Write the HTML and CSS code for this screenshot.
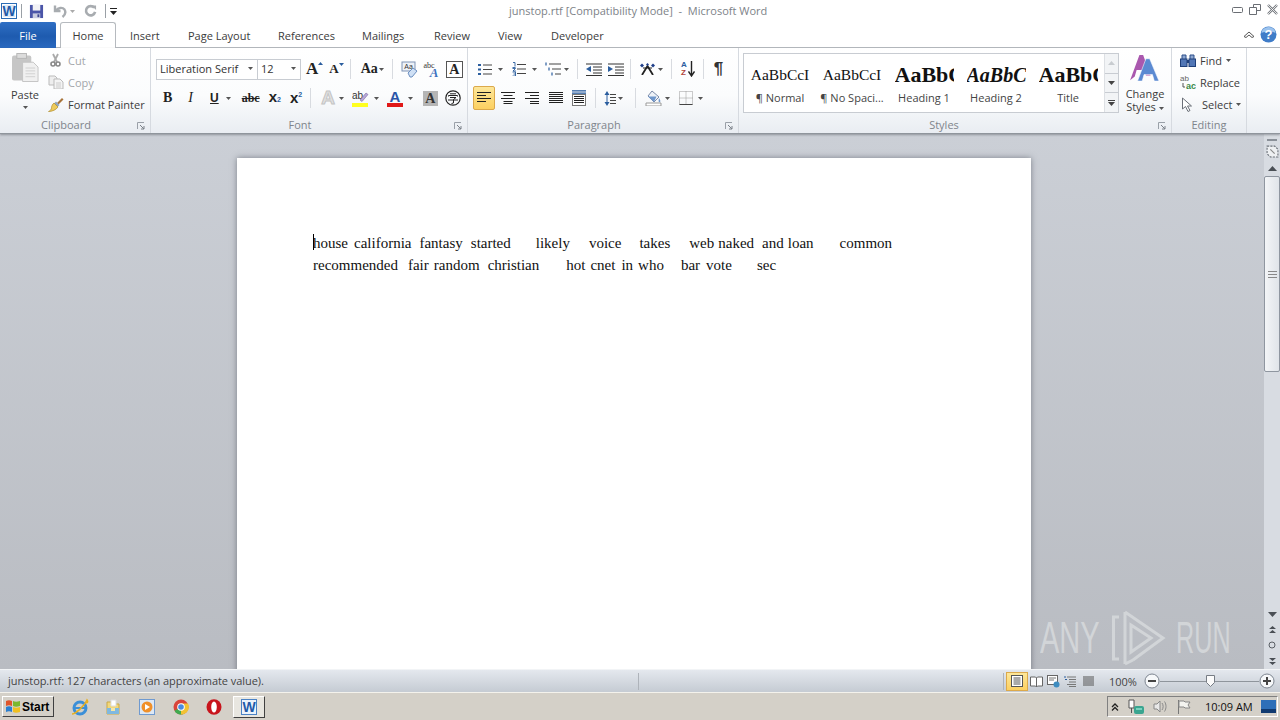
FILE: index.html
```html
<!DOCTYPE html>
<html lang="en">
<head>
<meta charset="utf-8">
<title>junstop.rtf</title>
<link rel="stylesheet" href="styles.css">
</head>
<body>
<div class="window">
  <header class="titlebar">
    <div class="qat">
      <svg class="wordlogo" width="16" height="16" viewBox="0 0 16 16"><rect x=".5" y=".5" width="15" height="15" fill="#fff" stroke="#2b6cb5"/><rect x="2" y="2" width="12" height="12" fill="#dce9f7"/><text x="8" y="13" class="wl">W</text></svg>
      <i class="qsep"></i>
      <svg class="save" width="15" height="15" viewBox="0 0 16 16"><path d="M1 1h14v14H1z" fill="#4a55a8"/><path d="M4 1h8v6H4z" fill="#f2f2f5"/><path d="M4 10h8v5H4z" fill="#c8cce0"/><path d="M9 11h2v3H9z" fill="#3b4590"/></svg>
      <svg class="undo" width="14" height="14" viewBox="0 0 14 14"><path d="M2 1.500v5.500h5.500" fill="none" stroke="#a8acb0" stroke-width="2.400"/><path d="M3 6.500C5 3.500 9.500 3 11.500 5.500c1.500 2.500.5 5.500-2 7.500" fill="none" stroke="#a8acb0" stroke-width="2.400"/></svg>
      <svg class="tri tri-q" width="5" height="3" viewBox="0 0 5 3"><path d="M0 0h5L2.500 3z"/></svg>
      <svg class="redo" width="13" height="14" viewBox="0 0 14 14"><path d="M11 3.500A5 5 0 1 0 12 8" fill="none" stroke="#a8acb0" stroke-width="2.800"/><path d="M8 1h5v5z" fill="#a8acb0"/></svg>
      <i class="qsep"></i>
      <svg class="qmore" width="7" height="7" viewBox="0 0 7 7"><path d="M0 0h7v1H0zM0 3h7L3.500 7z" fill="#222"/></svg>
    </div>
    <div class="title">junstop.rtf [Compatibility Mode]&nbsp; -&nbsp; Microsoft Word</div>
    <div class="winctl">
      <svg width="11" height="6" viewBox="0 0 11 6"><rect x=".5" y=".5" width="10" height="5" rx="1" fill="#fff" stroke="#6a6e74"/></svg>
      <svg width="12" height="11" viewBox="0 0 12 11"><path d="M4.500.5h7v6h-7z" fill="#fff" stroke="#6a6e74"/><path d="M.5 3.500h7v7h-7z" fill="#fff" stroke="#6a6e74"/></svg>
      <svg width="11" height="11" viewBox="0 0 11 11"><path d="M1 1l9 9M10 1l-9 9" stroke="#777b80" stroke-width="2.400"/><path d="M1 1l9 9M10 1l-9 9" stroke="#fff" stroke-width=".8"/></svg>
    </div>
  </header>

  <nav class="tabs">
    <div class="tab file">File</div>
    <div class="tab home">Home</div>
    <div class="tab t-ins">Insert</div>
    <div class="tab t-pl">Page Layout</div>
    <div class="tab t-ref">References</div>
    <div class="tab t-mai">Mailings</div>
    <div class="tab t-rev">Review</div>
    <div class="tab t-vie">View</div>
    <div class="tab t-dev">Developer</div>
    <div class="tabend">
      <svg width="12" height="7" viewBox="0 0 12 7"><path d="M1 5.500L6 1l5 4.500-2 1L6 4 3 6.500z" fill="#fff" stroke="#555"/></svg>
      <svg width="17" height="17" viewBox="0 0 17 17"><circle cx="8.500" cy="8.500" r="8" fill="#3f7cc8"/><path d="M1.500 7a7 6 0 0 1 14 0c-3-2-10-2-14 0z" fill="#9cc3ee"/><text x="8.500" y="13" class="helpq">?</text></svg>
    </div>
  </nav>

  <section class="ribbon">
    <div class="group g-clip">
      <div class="gbody clip-body">
        <div class="paste">
          <svg width="27" height="30" viewBox="0 0 28 30"><rect x="0" y="2" width="20" height="26" rx="2" fill="#c6c6c6"/><rect x="5" y="0" width="10" height="5" fill="#dcdcdc" stroke="#b5b5b5"/><path d="M11 9h11l5 5v15H11z" fill="#f0f0f0" stroke="#c4c4c4"/><path d="M14 15h10M14 18h10M14 21h10M14 24h10" stroke="#d0d0d0"/></svg>
          <span class="lbl paste-l">Paste</span>
          <svg class="tri" width="5" height="3" viewBox="0 0 5 3"><path d="M0 0h5L2.500 3z"/></svg>
        </div>
        <div class="clip-col">
          <div class="row dim"><svg width="14" height="14" viewBox="0 0 14 14"><path d="M4 1l4 8M9 1L5 9" stroke="#aaa" stroke-width="1.800"/><circle cx="4" cy="11" r="2" fill="none" stroke="#888" stroke-width="1.600"/><circle cx="9" cy="11" r="2" fill="none" stroke="#888" stroke-width="1.600"/></svg><span class="lbl">Cut</span></div>
          <div class="row dim"><svg width="16" height="14" viewBox="0 0 16 14"><path d="M1 1h6l2 2v7H1z" fill="#eee" stroke="#bbb"/><path d="M6 4h6l3 3v7H6z" fill="#f4f4f4" stroke="#bbb"/><path d="M8 8h5M8 10h5M8 12h5" stroke="#ccc"/></svg><span class="lbl">Copy</span></div>
          <div class="row"><svg width="16" height="15" viewBox="0 0 16 15"><path d="M9 6l5-5 1.500 1.500-5 5z" fill="#a8743a"/><path d="M8 4.500l3.500 3.500-2 2-3.500-3.500z" fill="#8fa6c0"/><path d="M6 6l4 4c-2 3-6 4.500-9.500 4.500 2-1 3-2 3-4 0-1 1-3.500 2.500-4.500z" fill="#eecb5b" stroke="#b08c2c" stroke-width=".7"/></svg><span class="lbl">Format Painter</span></div>
        </div>
      </div>
      <div class="gname"><span>Clipboard</span><svg class="launch" width="8" height="8" viewBox="0 0 8 8"><path d="M.5 7V.5H7" fill="none" stroke="#9aa0a8"/><path d="M3 3l4 4M7 4v3H4" fill="none" stroke="#7a8088"/></svg></div>
    </div>

    <div class="group g-font">
      <div class="gbody font-body">
        <div class="frow frow1">
          <div class="combo fname"><span>Liberation Serif</span><svg class="tri" width="5" height="3" viewBox="0 0 5 3"><path d="M0 0h5L2.500 3z"/></svg></div>
          <div class="combo fsize"><span>12</span><svg class="tri" width="5" height="3" viewBox="0 0 5 3"><path d="M0 0h5L2.500 3z"/></svg></div>
          <span class="ic grow">A<svg width="5" height="3" viewBox="0 0 5 3"><path d="M0 3h5L2.500 0z" fill="#2a5d9e"/></svg></span>
          <span class="ic shrink">A<svg width="5" height="3" viewBox="0 0 5 3"><path d="M0 0h5L2.500 3z" fill="#2a5d9e"/></svg></span>
          <i class="vsep s1"></i>
          <span class="ic aa">Aa<svg class="tri" width="5" height="3" viewBox="0 0 5 3"><path d="M0 0h5L2.500 3z"/></svg></span>
          <i class="vsep s2"></i>
          <svg class="clearfmt" width="17" height="17" viewBox="0 0 17 17"><rect x="1" y="1" width="13" height="9" fill="#eef2f8" stroke="#7f93b5"/><text x="7.500" y="8" class="tiny">Aa</text><path d="M7 12l5-5 4 3-5 6H9z" fill="#cfe0f5" stroke="#6c8fc0"/></svg>
          <svg class="texteff" width="17" height="17" viewBox="0 0 17 17"><text x="7" y="7" class="tiny2">abc</text><text x="12" y="16" class="blueA">A</text></svg>
          <span class="boxA">A</span>
        </div>
        <div class="frow frow2">
          <span class="fb b">B</span>
          <span class="fb it">I</span>
          <span class="fb u">U</span><svg class="tri tri-u" width="5" height="3" viewBox="0 0 5 3"><path d="M0 0h5L2.500 3z"/></svg>
          <span class="fb st">abc</span>
          <span class="fb sub">x<small>2</small></span>
          <span class="fb sup">x<sup>2</sup></span>
          <i class="vsep s3"></i>
          <span class="ghostA">A</span><svg class="tri tri-g" width="5" height="3" viewBox="0 0 5 3"><path d="M0 0h5L2.500 3z" fill="#aaa"/></svg>
          <svg class="hl" width="17" height="17" viewBox="0 0 17 17"><text x="0" y="9" class="ab">ab</text><path d="M8 10l6-7 2 1.500-6 7z" fill="#b8a8d8" stroke="#7a68a0" stroke-width=".6"/><rect x="0" y="13" width="16" height="4" fill="#ffff20"/></svg>
          <svg class="tri tri-h" width="5" height="3" viewBox="0 0 5 3"><path d="M0 0h5L2.500 3z"/></svg>
          <span class="colA">A</span>
          <svg class="tri tri-c" width="5" height="3" viewBox="0 0 5 3"><path d="M0 0h5L2.500 3z"/></svg>
          <span class="shadeA">A</span>
          <svg class="enc" width="16" height="16" viewBox="0 0 16 16"><circle cx="8" cy="8" r="7.200" fill="none" stroke="#222" stroke-width="1.200"/><path d="M5 3.800h6M3.500 6.500v-1h9v1M5 7.500h6L8.500 9.500M3 10h10M8.500 9.500v3.500l-2 .5" fill="none" stroke="#222"/></svg>
        </div>
      </div>
      <div class="gname"><span>Font</span><svg class="launch" width="8" height="8" viewBox="0 0 8 8"><path d="M.5 7V.5H7" fill="none" stroke="#9aa0a8"/><path d="M3 3l4 4M7 4v3H4" fill="none" stroke="#7a8088"/></svg></div>
    </div>

    <div class="group g-para">
      <div class="gbody para-body">
        <div class="prow prow1">
          <svg width="14" height="13" viewBox="0 0 14 13"><path d="M5 2h9M5 6.500h9M5 11h9" stroke="#444"/><path d="M0 1h3v2H0zM0 5.500h3v2H0zM0 10h3v2H0z" fill="#2a5d9e"/></svg>
          <svg class="tri pt" width="5" height="3" viewBox="0 0 5 3"><path d="M0 0h5L2.500 3z"/></svg>
          <svg class="numl" width="14" height="14" viewBox="0 0 14 14"><path d="M5 2.500h9M5 7h9M5 11.500h9" stroke="#444"/><path d="M1 .5h2v4M.5 5.500h3M.5 6.500h3l-2.500 2.500h3M.5 10h3v4h-3M1.500 12h2" fill="none" stroke="#2a5d9e" stroke-width=".9"/></svg>
          <svg class="tri pt" width="5" height="3" viewBox="0 0 5 3"><path d="M0 0h5L2.500 3z"/></svg>
          <svg class="mlev" width="16" height="14" viewBox="0 0 16 14"><path d="M4 2h12M7 7h9M10 12h6" stroke="#444"/><path d="M1 .5v3M4 5.500v3M7 10.500v3" stroke="#2a5d9e" stroke-width="1.200"/></svg>
          <svg class="tri pt" width="5" height="3" viewBox="0 0 5 3"><path d="M0 0h5L2.500 3z"/></svg>
          <i class="vsep ps1"></i>
          <svg class="outd" width="16" height="13" viewBox="0 0 16 13"><path d="M0 1h16M7 4h9M7 7h9M7 10h9M0 12.500h16" stroke="#333"/><path d="M0 6l5-3v6z" fill="#2a5d9e"/></svg>
          <svg class="ind" width="16" height="13" viewBox="0 0 16 13"><path d="M0 1h16M7 4h9M7 7h9M7 10h9M0 12.500h16" stroke="#333"/><path d="M5 6L0 3v6z" fill="#2a5d9e"/></svg>
          <i class="vsep ps2"></i>
          <svg class="asian" width="17" height="12" viewBox="0 0 17 12"><path d="M3 12L8.500 3l5.500 9" fill="none" stroke="#222" stroke-width="1.800"/><path d="M4 5h9" stroke="#222"/><path d="M3 .5l2 2-2 2-2-2zM14 .5l2 2-2 2-2-2zM8.500 0l1.500 1.500L8.500 3 7 1.500z" fill="#1f3f8a"/></svg>
          <svg class="tri pt" width="5" height="3" viewBox="0 0 5 3"><path d="M0 0h5L2.500 3z"/></svg>
          <i class="vsep ps3"></i>
          <span class="sort"><b class="az"><em>A</em><em class="z">Z</em></b><svg width="7" height="16" viewBox="0 0 7 16"><path d="M3.500 0v14M.5 10.500l3 4.500 3-4.500" fill="none" stroke="#222" stroke-width="1.400"/></svg></span>
          <i class="vsep ps4"></i>
          <span class="pilcrow">¶</span>
        </div>
        <div class="prow prow2">
          <span class="alignbtn on"><svg width="14" height="12" viewBox="0 0 14 12"><path d="M0 .5h14M0 3.500h9M0 6.500h14M0 9.500h9" stroke="#222"/></svg></span>
          <span class="alignbtn"><svg width="14" height="12" viewBox="0 0 14 12"><path d="M0 .5h14M2.500 3.500h9M0 6.500h14M2.500 9.500h9M2.500 11.500h9" stroke="#222"/></svg></span>
          <span class="alignbtn"><svg width="14" height="12" viewBox="0 0 14 12"><path d="M0 .5h14M5 3.500h9M0 6.500h14M5 9.500h9M5 11.500h9" stroke="#222"/></svg></span>
          <span class="alignbtn"><svg width="14" height="12" viewBox="0 0 14 12"><path d="M0 .5h14M0 2.500h14M0 4.500h14M0 6.500h14M0 8.500h14M0 10.500h14" stroke="#222"/></svg></span>
          <svg class="distrib" width="16" height="16" viewBox="0 0 16 16"><path d="M1 .5h14M1 3.500h14" stroke="#2a5d9e" stroke-width=".8"/><path d="M1 2h14" stroke="#2a5d9e"/><rect x="1.500" y="4.500" width="13" height="11" fill="#fff" stroke="#777"/><path d="M3 6.500h10M3 8.500h10M3 10.500h10M3 12.500h10" stroke="#222"/></svg>
          <i class="vsep ps5"></i>
          <svg class="lsp" width="12" height="15" viewBox="0 0 12 15"><path d="M3 0l2.500 4h-5zM3 15L.5 11h5z" fill="#2a5d9e"/><path d="M3 4v7" stroke="#2a5d9e"/><path d="M6 3.500h6M6 6.500h6M6 9.500h6M6 12.500h6" stroke="#444"/></svg>
          <svg class="tri pt" width="5" height="3" viewBox="0 0 5 3"><path d="M0 0h5L2.500 3z"/></svg>
          <i class="vsep ps6"></i>
          <svg class="fill" width="17" height="16" viewBox="0 0 17 16"><path d="M7 1l7 6-5 5-6-6z" fill="#eef2f8" stroke="#7a8aa8"/><path d="M3 6.500h8.500L9 12z" fill="#6f97cc"/><path d="M14 8c1 2 2 3 1 4s-2 0-1-4z" fill="#6f97cc"/><path d="M1 13h15v3H1z" fill="#fff" stroke="#999"/></svg>
          <svg class="tri pt" width="5" height="3" viewBox="0 0 5 3"><path d="M0 0h5L2.500 3z"/></svg>
          <svg class="bord" width="14" height="14" viewBox="0 0 14 14"><path d="M.5.500h13v13H.5zM7 .5v13M.5 7h13" fill="none" stroke="#999" stroke-dasharray="1 1"/><path d="M.5 13.500h13" stroke="#444"/></svg>
          <svg class="tri pt" width="5" height="3" viewBox="0 0 5 3"><path d="M0 0h5L2.500 3z"/></svg>
        </div>
      </div>
      <div class="gname"><span>Paragraph</span><svg class="launch" width="8" height="8" viewBox="0 0 8 8"><path d="M.5 7V.5H7" fill="none" stroke="#9aa0a8"/><path d="M3 3l4 4M7 4v3H4" fill="none" stroke="#7a8088"/></svg></div>
    </div>

    <div class="group g-styles">
      <div class="gbody styles-body">
        <div class="gallery">
          <div class="style s-n"><div class="prev">AaBbCcI</div><div class="sname">¶ Normal</div></div>
          <div class="style s-n"><div class="prev">AaBbCcI</div><div class="sname">¶ No Spaci...</div></div>
          <div class="style s-h"><div class="prev">AaBbC</div><div class="sname">Heading 1</div></div>
          <div class="style s-h2"><div class="prev">AaBbCc</div><div class="sname">Heading 2</div></div>
          <div class="style s-h"><div class="prev">AaBbC</div><div class="sname">Title</div></div>
          <div class="gscroll">
            <span class="gs g1"><svg width="7" height="4" viewBox="0 0 7 4"><path d="M0 4h7L3.500 0z" fill="#c8ccd0"/></svg></span>
            <span class="gs g2"><svg width="7" height="4" viewBox="0 0 7 4"><path d="M0 0h7L3.500 4z" fill="#444"/></svg></span>
            <span class="gs g3"><svg width="7" height="6" viewBox="0 0 7 6"><path d="M0 0h7v1H0zM0 2h7L3.500 6z" fill="#444"/></svg></span>
          </div>
        </div>
        <div class="chstyles">
          <svg width="30" height="27" viewBox="0 0 32 29"><path d="M0 27L10 0h4l8 22h-5l-2-6H7l-2 7z" fill="#a958ae"/><path d="M8 28L17 4h4l10 24h-5l-2-7h-9l-2 7z" fill="#5b8ad2" stroke="#fff" stroke-width=".6"/></svg>
          <span class="lbl chl">Change<br>Styles<svg class="tri tri-ch" width="5" height="3" viewBox="0 0 5 3"><path d="M0 0h5L2.500 3z"/></svg></span>
        </div>
      </div>
      <div class="gname gname-st"><span>Styles</span><svg class="launch" width="8" height="8" viewBox="0 0 8 8"><path d="M.5 7V.5H7" fill="none" stroke="#9aa0a8"/><path d="M3 3l4 4M7 4v3H4" fill="none" stroke="#7a8088"/></svg></div>
    </div>

    <div class="group g-edit">
      <div class="gbody edit-body">
        <div class="row"><svg width="16" height="13" viewBox="0 0 16 13"><path d="M2 5V1h4v4M10 5V1h4v4" fill="#8ea7d0" stroke="#2d4f8a"/><rect x="0.500" y="5" width="6.500" height="7.500" fill="#5277b6" stroke="#20407a"/><rect x="9" y="5" width="6.500" height="7.500" fill="#5277b6" stroke="#20407a"/><path d="M7 6h2v3H7z" fill="#20407a"/></svg><span class="lbl">Find</span><svg class="tri" width="5" height="3" viewBox="0 0 5 3"><path d="M0 0h5L2.500 3z"/></svg></div>
        <div class="row"><svg width="16" height="15" viewBox="0 0 16 15"><text x="0" y="6" class="rp1">ab</text><text x="6" y="14" class="rp2">ac</text><path d="M3 8v4h2" fill="none" stroke="#555"/></svg><span class="lbl">Replace</span></div>
        <div class="row"><svg width="13" height="15" viewBox="0 0 13 15"><path d="M1 1v11l3-2.500 2.500 5 2-1-2.500-4.500H10z" fill="#fff" stroke="#6b7078"/></svg><span class="lbl sel">Select</span><svg class="tri" width="5" height="3" viewBox="0 0 5 3"><path d="M0 0h5L2.500 3z"/></svg></div>
      </div>
      <div class="gname gname-ed"><span>Editing</span></div>
    </div>
  </section>

  <main class="workspace">
    <div class="docarea">
      <article class="page">
        <p class="line"><i class="caret"></i><span class="w1">house</span><span class="w2">california</span><span class="w3">fantasy</span><span class="w4">started</span><span class="w5">likely</span><span class="w6">voice</span><span class="w7">takes</span><span class="w8">web</span><span class="w9">naked</span><span class="w10">and</span><span class="w11">loan</span><span class="w12">common</span></p>
        <p class="line"><span class="x1">recommended</span><span class="x2">fair</span><span class="x3">random</span><span class="x4">christian</span><span class="x5">hot</span><span class="x6">cnet</span><span class="x7">in</span><span class="x8">who</span><span class="x9">bar</span><span class="x10">vote</span><span class="x11">sec</span></p>
      </article>
    </div>
    <aside class="vscroll">
      <i class="rulerbtn"></i>
      <svg class="rulericon" width="13" height="13" viewBox="0 0 12 12"><path d="M1 1h7l3 3v7H4L1 8z" fill="#eef0f2" stroke="#6a7078" stroke-dasharray="2 1"/><path d="M4 4l4 4" stroke="#888"/></svg>
      <span class="sbtn up"><svg width="9" height="5" viewBox="0 0 9 5"><path d="M0 5h9L4.500 0z" fill="#4a4f55"/></svg></span>
      <div class="thumbtrack"><div class="thumb"><i class="grip"></i></div></div>
      <div class="sbot">
        <span class="sbtn"><svg width="9" height="5" viewBox="0 0 9 5"><path d="M0 0h9L4.500 5z" fill="#4a4f55"/></svg></span>
        <span class="sbtn small"><svg width="7" height="7" viewBox="0 0 7 7"><path d="M0 3h7L3.500 0zM0 7h7L3.500 4z" fill="#4a4f55"/></svg></span>
        <span class="sbtn small"><svg width="8" height="8" viewBox="0 0 8 8"><circle cx="4" cy="4" r="3" fill="none" stroke="#5a5f65"/></svg></span>
        <span class="sbtn small"><svg width="7" height="7" viewBox="0 0 7 7"><path d="M0 0h7L3.500 3zM0 4h7L3.500 7z" fill="#4a4f55"/></svg></span>
      </div>
    </aside>
    <div class="watermark">
      <span class="wm-t wm-any">ANY</span>
      <svg class="wm-logo" width="56" height="56" viewBox="0 0 56 56"><path d="M8 7H2.500v42H8" fill="none" stroke="#d2d5d8" stroke-width="3"/><path d="M14 2v52M14 2l38 26-30 22M14 54l8-4" fill="none" stroke="#d2d5d8" stroke-width="3"/><path d="M20 15v27l20-14z" fill="none" stroke="#d2d5d8" stroke-width="3"/></svg>
      <span class="wm-t wm-run">RUN</span>
    </div>
  </main>

  <footer class="status">
    <span class="stext">junstop.rtf: 127 characters (an approximate value).</span>
    <i class="stsep a"></i>
    <i class="stsep b"></i>
    <span class="viewbtn on"><svg width="12" height="12" viewBox="0 0 12 12"><rect x=".5" y=".5" width="11" height="11" fill="#fff" stroke="#555"/><path d="M2.500 3h7M2.500 5h7M2.500 7h7M2.500 9h7" stroke="#555"/></svg></span>
    <svg class="vi" width="13" height="11" viewBox="0 0 13 11"><path d="M.5 1h5l1 1 1-1h5v9h-5l-1 1-1-1h-5zM6.500 2v9" fill="#fff" stroke="#666"/></svg>
    <svg class="vi" width="13" height="13" viewBox="0 0 13 13"><rect x=".5" y=".5" width="10" height="9" fill="#fff" stroke="#666"/><path d="M2 3h7M2 5h5" stroke="#777"/><circle cx="9.500" cy="9.500" r="3" fill="#3d8cc0"/></svg>
    <svg class="vi" width="12" height="11" viewBox="0 0 12 11"><path d="M3 1h9M5 3.500h7M5 6h7M3 8.500h9M5 10.500h7" stroke="#777"/><path d="M0 1h2M1 3.500h2" stroke="#2a5d9e"/></svg>
    <svg class="vi v-draft" width="11" height="11" viewBox="0 0 11 11"><path d="M0 1h11M0 3h11M0 5h11M0 7h11M0 9h11" stroke="#555"/></svg>
    <span class="zoomp">100%</span>
    <svg class="zb" width="16" height="16" viewBox="0 0 16 16"><circle cx="8" cy="8" r="7" fill="#f6f8fa" stroke="#7d8590"/><path d="M4 8h8" stroke="#444" stroke-width="2"/></svg>
    <div class="slider"><svg class="knob" width="9" height="12" viewBox="0 0 9 12"><path d="M.5.500h8v7l-4 4-4-4z" fill="#fbfbfb" stroke="#767c84"/></svg></div>
    <svg class="zb" width="16" height="16" viewBox="0 0 16 16"><circle cx="8" cy="8" r="7" fill="#f6f8fa" stroke="#7d8590"/><path d="M4 8h8M8 4v8" stroke="#444" stroke-width="2"/></svg>
  </footer>

  <footer class="taskbar">
    <div class="start"><svg width="16" height="15" viewBox="0 0 16 15"><path d="M1 2c2-1 4-1 6 0v5C5 6 3 6 1 7z" fill="#e0552a"/><path d="M8 2c2 1 4 1 7 0v5c-3 1-5 1-7 0z" fill="#7ab82e"/><path d="M1 8c2-1 4-1 6 0v5c-2-1-4-1-6 0z" fill="#2a7fd0"/><path d="M8 8c2 1 4 1 7 0v5c-3 1-5 1-7 0z" fill="#f0c020"/></svg><span>Start</span></div>
    <svg class="tk ie" width="18" height="18" viewBox="0 0 18 18"><circle cx="9" cy="10" r="6" fill="none" stroke="#3b8fd8" stroke-width="3"/><path d="M3 10h12" stroke="#3b8fd8" stroke-width="2"/><path d="M1 16c3 0 12-7 15-14 2 3-1 3-2 3" fill="none" stroke="#e8b020" stroke-width="1.500"/></svg>
    <svg class="tk ex" width="16" height="16" viewBox="0 0 16 16"><path d="M2 3h5l1 2h6v10H2z" fill="#f2d77a" stroke="#c9a948"/><path d="M6 1h5v6H6z" fill="#fff" stroke="#ddd"/><path d="M2 9h12v6H2z" fill="#7fb8e0"/><path d="M6 9h4v3H6z" fill="#f4e6a8"/></svg>
    <svg class="tk mp" width="16" height="16" viewBox="0 0 16 16"><rect x=".5" y=".5" width="15" height="15" fill="#dde8f5" stroke="#6f9ad0"/><circle cx="8" cy="8" r="5.500" fill="#f0902a"/><path d="M6 5l5 3-5 3z" fill="#fff"/></svg>
    <svg class="tk ch" width="16" height="16" viewBox="0 0 16 16"><circle cx="8" cy="8" r="7.500" fill="#d9443a"/><path d="M8 8L1.500 11.800A7.500 7.500 0 0 0 10 15.200z" fill="#3faa4f"/><path d="M8 4.500h7A7.500 7.500 0 0 1 8 15.500z" fill="#f2c232"/><circle cx="8" cy="8" r="3.800" fill="#fff"/><circle cx="8" cy="8" r="2.800" fill="#4a8be0"/></svg>
    <svg class="tk op" width="16" height="16" viewBox="0 0 16 16"><ellipse cx="8" cy="8" rx="7.500" ry="7.800" fill="#c8141c"/><ellipse cx="8" cy="8" rx="2.800" ry="5.500" fill="#fff"/></svg>
    <div class="tkword"><svg width="16" height="16" viewBox="0 0 16 16"><rect x=".5" y=".5" width="15" height="15" fill="#eaf2fb" stroke="#4a82c5"/><text x="8" y="13" class="wl">W</text></svg></div>
    <div class="tray">
      <svg width="8" height="8" viewBox="0 0 8 8"><path d="M1 4l3-3 3 3M1 7.500l3-3 3 3" fill="none" stroke="#222" stroke-width="1.300"/></svg>
      <svg class="tr-net" width="17" height="16" viewBox="0 0 17 16"><path d="M1 1h5v8H1z" fill="#fff" stroke="#555"/><path d="M3.500 9v5" stroke="#555"/><rect x="6" y="7" width="10" height="8" rx="2" fill="#3aa590"/><path d="M8 10h6" stroke="#bfe" /></svg>
      <svg class="tr-vol" width="15" height="15" viewBox="0 0 15 15"><path d="M1 5h3l3-3v11l-3-3H1z" fill="#e8e8e8" stroke="#888"/><path d="M9 4c1.500 2 1.500 5 0 7M11.500 2.500c2 3 2 7 0 10" fill="none" stroke="#888"/></svg>
      <svg class="tr-flag" width="15" height="15" viewBox="0 0 15 15"><path d="M1.500 1v14" stroke="#777"/><path d="M2 2h5l1 1h5l-2 3 2 3H8L7 8H2z" fill="#f4f4f0" stroke="#888"/></svg>
      <span class="clock">10:09 AM</span>
      <svg class="tr-desk" width="15" height="13" viewBox="0 0 15 13"><rect width="15" height="13" fill="#2d6fb8"/><rect y="9" width="15" height="4" fill="#103a70"/></svg>
    </div>
  </footer>
</div>
</body>
</html>
```
FILE: styles.css
```css
* { box-sizing: border-box; }
html, body { margin: 0; padding: 0; }
body { width: 1280px; height: 720px; overflow: hidden; font-family: "Open Sans", "Liberation Sans", sans-serif; color: #444; }
i, em { font-style: normal; display: block; }
svg { display: block; flex: none; }
.window { width: 1280px; height: 720px; display: flex; flex-direction: column; background: #fff; position: relative; }
.tri path { fill: #555; }

.titlebar { height: 22px; display: flex; align-items: center; background: #fff; flex: none; }
.qat { display: flex; align-items: center; width: 509px; padding-left: 1px; }
.qsep { width: 1px; height: 14px; background: #9aa0a6; }
.wordlogo { margin-right: 4px; }
.qat .qsep:nth-of-type(1) { margin-right: 7px; }
.save { margin-right: 9px; }
.undo { margin-right: 3px; }
.tri-q { margin-right: 9px; }
.tri-q path { fill: #aaa; }
.redo { margin-right: 8px; }
.qmore { margin-left: 4px; }
.wl { font: bold 14px "Liberation Sans", sans-serif; text-anchor: middle; fill: #1f5aa8; }
.title { font: 11px/24px "Open Sans", sans-serif; color: #7d8288; width: 300px; white-space: nowrap; }
.winctl { margin-left: auto; display: flex; align-items: center; gap: 6px; padding: 0 2px 3px 0; }

.tabs { height: 26px; display: flex; background: #fff; border-bottom: 1px solid #b6babf; flex: none; position: relative; }
.tab { font-size: 11px; line-height: 27px; color: #3b3b3b; white-space: nowrap; }
.tab.file { width: 56px; height: 26px; background: linear-gradient(#2f6fc4, #1e5baf 55%, #2a69bf); color: #fff; text-align: center; border-radius: 2px 2px 0 0; margin-right: 4px; }
.tab.home { width: 56px; height: 26px; text-align: center; background: #fff; border: 1px solid #b6babf; border-bottom: 0; border-radius: 3px 3px 0 0; margin-right: 14px; line-height: 26px; }
.t-ins { width: 58px; }
.t-pl { width: 90px; }
.t-ref { width: 84px; }
.t-mai { width: 72px; }
.t-rev { width: 64px; }
.t-vie { width: 53px; }
.t-dev { width: 70px; }
.tabend { margin-left: auto; display: flex; align-items: center; gap: 5px; padding: 0 3px 0 0; }
.helpq { font: bold 13px "Liberation Sans", sans-serif; fill: #fff; text-anchor: middle; }

.ribbon { height: 86px; flex: none; display: flex; background: linear-gradient(#fff, #fbfcfd 55%, #e9edf2); border-bottom: 1px solid #8f959c; box-shadow: 0 1px 2px rgba(70,75,85,.45); position: relative; z-index: 2; }
.group { display: flex; flex-direction: column; border-right: 1px solid #d6dae0; flex: none; }
.g-clip { width: 151px; }
.g-font { width: 317px; }
.g-para { width: 271px; }
.g-styles { width: 433px; }
.g-edit { width: 75px; }
.gbody { flex: 1; display: flex; min-height: 0; }
.gname { height: 16px; display: flex; justify-content: center; align-items: center; font-size: 11px; color: #80858c; position: relative; padding-right: 18px; line-height: 14px; }
.gname-st { padding-right: 22px; }
.gname-ed { padding-right: 0; }
.launch { position: absolute; right: 5px; top: 5px; }
.lbl { font-size: 11px; color: #3c3c3c; white-space: nowrap; }

.clip-body { padding: 5px 0 0 6px; }
.paste { width: 38px; display: flex; flex-direction: column; align-items: center; }
.paste-l { margin-top: 5px; line-height: 14px; }
.paste .tri { margin-top: 4px; }
.clip-col { display: flex; flex-direction: column; margin: -4px 0 0 4px; }
.row { height: 22px; display: flex; align-items: center; gap: 4px; }
.row.dim .lbl { color: #a3a6aa; }
.clip-col .row svg { width: 16px; }

.font-body { flex-direction: column; padding: 10px 0 0 5px; }
.frow { display: flex; align-items: center; }
.frow1 { height: 22px; }
.frow2 { height: 24px; margin-top: 6px; }
.combo { height: 21px; border: 1px solid #c8ccd2; background: #fff; display: flex; align-items: center; justify-content: space-between; padding: 0 4px 2px 3px; font-size: 11px; color: #333; white-space: nowrap; }
.fname { width: 102px; }
.fsize { width: 43px; border-left: 0; }
.ic { font-family: "Liberation Serif", serif; font-weight: bold; color: #222; display: flex; align-items: flex-start; }
.grow { font-size: 17px; line-height: 18px; margin-left: 5px; }
.shrink { font-size: 13px; line-height: 16px; margin-left: 6px; }
.grow svg, .shrink svg { margin-top: 2px; }
.vsep { width: 1px; background: #d8dbe0; height: 20px; flex: none; }
.s1 { margin: 0 10px 0 6px; }
.aa { font-size: 14px; line-height: 18px; color: #222; align-items: center; gap: 1px; }
.s2 { margin: 0 8px 0 8px; }
.texteff { margin-left: 4px; }
.tiny { font: 7px "Liberation Sans", sans-serif; text-anchor: middle; fill: #333; }
.tiny2 { font: 8px "Liberation Serif", serif; text-anchor: middle; fill: #333; }
.blueA { font: bold italic 13px "Liberation Serif", serif; text-anchor: middle; fill: #3c72c0; }
.boxA { width: 17px; height: 17px; border: 1px solid #555; margin-left: 7px; font: bold 14px/15px "Liberation Serif", serif; text-align: center; color: #222; background: #fff; }

.fb { font-family: "Liberation Serif", serif; color: #222; font-size: 13px; line-height: 16px; }
.b { font-weight: bold; margin-left: 7px; font-size: 14px; }
.it { font-style: italic; margin-left: 16px; font-size: 14px; }
.u { text-decoration: underline; font-weight: bold; margin-left: 17px; font-family: "Liberation Sans", sans-serif; font-size: 12px; }
.tri-u { margin-left: 7px; }
.st { text-decoration: line-through; margin-left: 11px; font-weight: bold; font-size: 12px; }
.sub { margin-left: 9px; font-weight: bold; font-size: 15px; font-family: "Liberation Sans", sans-serif; }
.sub small { font-size: 7px; color: #2a5d9e; }
.sup { margin-left: 9px; font-weight: bold; font-size: 15px; font-family: "Liberation Sans", sans-serif; }
.sup sup { font-size: 7px; color: #2a5d9e; line-height: 0; }
.s3 { margin: 0 9px 0 8px; }
.ghostA { font: bold 19px/20px "Liberation Sans", sans-serif; color: #e2e2e2; -webkit-text-stroke: 1px #c4c4c4; margin-left: 1px; }
.tri-g { margin-left: 4px; }
.tri-h { margin-left: 5px; }
.hl { margin-left: 8px; }
.ab { font: 10px "Liberation Sans", sans-serif; fill: #333; }
.colA { width: 16px; margin-left: 8px; font: bold 15px/13px "Liberation Sans", sans-serif; color: #2a55a8; text-align: center; border-bottom: 4px solid #e01818; height: 17px; }
.tri-c { margin-left: 5px; }
.shadeA { width: 15px; height: 15px; margin-left: 10px; background: #b5b5b5; color: #333; font: bold 14px/15px "Liberation Serif", serif; text-align: center; }
.enc { margin-left: 7px; }

.para-body { flex-direction: column; padding: 10px 0 0 10px; }
.prow { display: flex; align-items: center; }
.prow1 { height: 22px; }
.prow2 { height: 24px; margin: 6px 0 0 -5px; }
.pt { margin-left: 6px; }
.numl { margin-left: 9px; }
.mlev { margin-left: 8px; }
.mlev + .pt { margin-left: 3px; }
.ps1 { margin: 0 8px 0 8px; }
.ind { margin-left: 6px; }
.ps2 { margin: 0 8px 0 6px; }
.asian + .pt { margin-left: 2px; }
.ps3 { margin: 0 9px 0 8px; }
.sort { display: flex; align-items: center; gap: 1px; }
.az { display: flex; flex-direction: column; font: bold 8px/8px "Liberation Sans", sans-serif; color: #2a5d9e; }
.az .z { color: #b0433a; }
.ps4 { margin: 0 10px 0 8px; }
.pilcrow { font: bold 17px/20px "Liberation Sans", sans-serif; color: #333; }
.alignbtn { width: 22px; height: 24px; margin-right: 2px; display: flex; align-items: center; justify-content: center; }
.alignbtn.on { background: linear-gradient(#fde79a, #fcd061); border: 1px solid #dca94b; border-radius: 2px; }
.distrib { margin-left: 2px; }
.ps5 { margin: 0 8px 0 8px; }
.lsp + .pt { margin-left: 2px; }
.ps6 { margin: 0 9px 0 12px; }
.bord { margin-left: 9px; }
.fill + .pt { margin-left: 3px; }
.bord + .pt { margin-left: 5px; }

.styles-body { padding: 5px 0 0 4px; }
.gallery { width: 376px; height: 60px; background: #fff; border: 1px solid #c8ccd2; display: flex; }
.style { width: 72px; height: 58px; display: flex; flex-direction: column; align-items: center; overflow: hidden; flex: none; }
.prev { font-family: "Liberation Serif", serif; color: #111; font-size: 15.5px; line-height: 20px; height: 34px; padding-top: 11px; width: 64px; overflow: hidden; white-space: nowrap; text-align: center; }
.s-h .prev { font-weight: bold; font-size: 22px; line-height: 26px; padding-top: 8px; text-align: left; width: 59px; }
.s-h2 .prev { font-weight: bold; font-style: italic; font-size: 20px; line-height: 26px; padding-top: 8px; text-align: left; width: 59px; }
.sname { font-size: 11px; color: #444; margin-top: 1px; white-space: nowrap; line-height: 18px; }
.gscroll { width: 14px; margin-left: auto; display: flex; flex-direction: column; border-left: 1px solid #dde0e4; }
.gs { flex: 1; display: flex; align-items: center; justify-content: center; background: #f2f4f6; border-bottom: 1px solid #c8ccd2; }
.gs.g3 { border-bottom: 0; }
.chstyles { width: 50px; display: flex; flex-direction: column; align-items: center; margin-left: 1px; }
.chstyles svg:first-child { margin-top: 2px; }
.chl { text-align: center; line-height: 13px; margin-top: 5px; display: block; }
.tri-ch { display: inline-block; margin-left: 3px; vertical-align: middle; }

.edit-body { flex-direction: column; padding: 1px 0 0 8px; }
.edit-body .row svg:first-child { width: 16px; }
.edit-body .tri { margin-left: 0; }
.rp1 { font: 8px "Liberation Sans", sans-serif; fill: #666; }
.rp2 { font: bold 9px "Liberation Sans", sans-serif; fill: #3a8a4a; }
.sel { margin-left: 2px; }

.workspace { flex: 1; min-height: 0; display: flex; background: linear-gradient(#cbcfd6, #b9bcc2); position: relative; overflow: hidden; }
.docarea { flex: 1; padding: 24px 0 0 237px; }
.page { width: 794px; height: 600px; background: #fff; box-shadow: 0 0 6px rgba(60,65,75,.55); padding: 74px 0 0 76px; }
.line { margin: 0; height: 22px; display: flex; font: 15px/22px "Liberation Serif", serif; color: #111; position: relative; white-space: nowrap; }
.caret { position: absolute; left: 0; top: 2px; width: 1px; height: 16px; background: #000; }
.vscroll { width: 16px; flex: none; background: #d8dce2; display: flex; flex-direction: column; align-items: center; position: relative; }
.rulerbtn { width: 10px; height: 2px; background: #8a9098; margin-top: 5px; }
.rulericon { margin: 4px 0 3px; }
.sbtn { height: 14px; display: flex; align-items: center; justify-content: center; }
.sbtn.up { height: 15px; }
.thumbtrack { flex: 1; width: 100%; }
.thumb { height: 196px; background: linear-gradient(90deg, #f3f5f7, #e0e4e9); border: 1px solid #8f96a0; border-radius: 2px; display: flex; align-items: center; justify-content: center; }
.grip { width: 9px; height: 7px; border-top: 1px solid #888; border-bottom: 1px solid #888; background: linear-gradient(transparent 2px, #888 2px, #888 3px, transparent 3px); }
.sbot { display: flex; flex-direction: column; align-items: center; width: 100%; }
.sbtn.small { height: 16px; }
.sbot .sbtn { width: 100%; }
.watermark { position: absolute; left: 1040px; top: 476px; width: 192px; height: 56px; display: flex; align-items: center; }
.wm-logo { margin-left: 8px; }
.wm-t { font: 45px/56px "Liberation Sans", sans-serif; color: #d2d5d8; transform-origin: left center; display: block; overflow: visible; }
.wm-any { width: 63px; transform: scaleX(.645); }
.wm-run { width: 58px; margin-left: 9px; transform: scaleX(.56); }

.status { height: 23px; flex: none; display: flex; align-items: center; background: linear-gradient(#e4e8ee, #c5cbd3); border-top: 1px solid #f2f4f6; position: relative; }
.stext { font-size: 11px; color: #444; margin: -1px 0 0 8px; width: 630px; white-space: nowrap; letter-spacing: -.06px; }
.stsep { width: 1px; height: 17px; background: #aeb3ba; }
.stsep.b { margin-left: 364px; margin-right: 2px; }
.viewbtn { width: 22px; height: 19px; display: flex; align-items: center; justify-content: center; }
.viewbtn.on { background: linear-gradient(#fde79a, #fcd061); border: 1px solid #dca94b; }
.vi { margin-left: 2px; margin-right: 2px; }
.vi.v-draft { margin-left: 5px; }
.zoomp { font-size: 11px; color: #444; margin-left: 13px; width: 35px; }
.zb { margin-left: 0; }
.slider { width: 99px; height: 1px; background: #8f959c; position: relative; }
.knob { position: absolute; left: 46px; top: -6px; }

.taskbar { height: 28px; flex: none; display: flex; align-items: center; background: #d4d0c8; border-top: 1px solid #f4f2ec; padding-left: 2px; position: relative; }
.start { width: 52px; height: 21px; background: #d4d0c8; border: 1px solid; border-color: #fff #404040 #404040 #fff; display: flex; align-items: center; gap: 1px; padding-left: 2px; font: bold 12px "Liberation Sans", sans-serif; color: #000; }
.tk.ie { margin-left: 17px; }
.tk.ex { margin-left: 16px; }
.tk.mp { margin-left: 18px; }
.tk.ch { margin-left: 18px; }
.tk.op { margin-left: 17px; }
.tkword { width: 32px; height: 22px; margin-left: 11px; display: flex; align-items: center; justify-content: center; background: #e8e6e0; border: 1px solid; border-color: #fff #404040 #404040 #fff; }
.tray { margin-left: auto; margin-right: 2px; height: 21px; width: 171px; display: flex; align-items: center; border: 1px solid; border-color: #808080 #fff #fff #808080; padding-left: 3px; }
.tr-net { margin-left: 9px; }
.tr-vol { margin-left: 8px; }
.tr-flag { margin-left: 9px; }
.clock { font: 11px "Open Sans", sans-serif; color: #111; margin-left: 13px; white-space: nowrap; }
.tr-desk { margin-left: 8px; }

.w2 { margin-left: 6px; } .w3 { margin-left: 8px; } .w4 { margin-left: 8px; } .w5 { margin-left: 25px; } .w6 { margin-left: 19px; } .w7 { margin-left: 18px; } .w8 { margin-left: 19px; } .w9 { margin-left: 4px; } .w10 { margin-left: 8px; } .w11 { margin-left: 4px; } .w12 { margin-left: 26px; }
.x2 { margin-left: 10px; } .x3 { margin-left: 5px; } .x4 { margin-left: 8px; } .x5 { margin-left: 27px; } .x6 { margin-left: 5px; } .x7 { margin-left: 6px; } .x8 { margin-left: 5px; } .x9 { margin-left: 17px; } .x10 { margin-left: 6px; } .x11 { margin-left: 25px; }
```
